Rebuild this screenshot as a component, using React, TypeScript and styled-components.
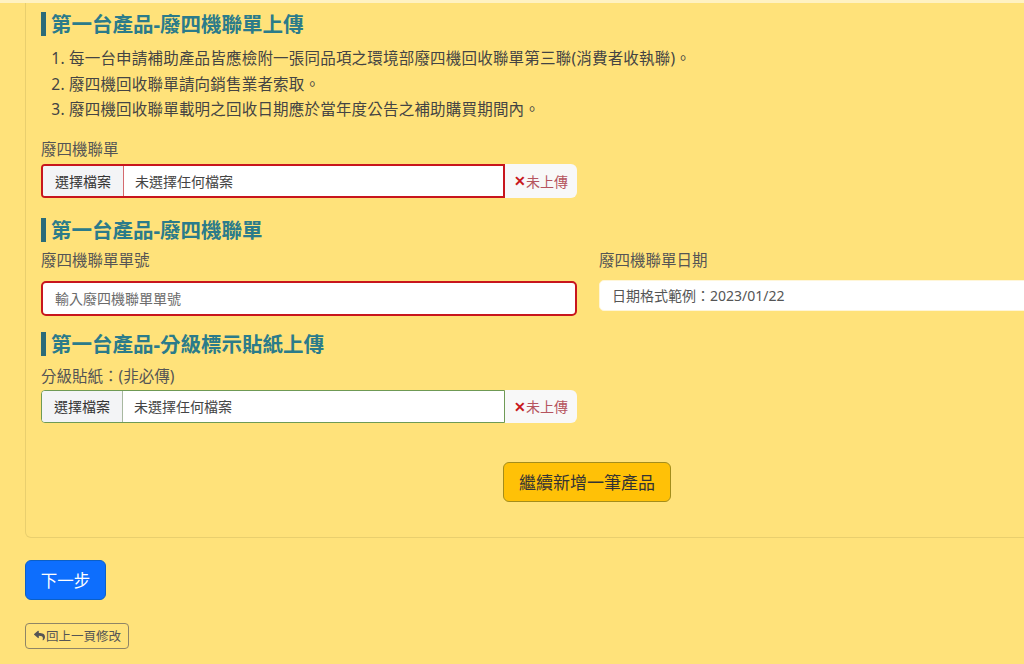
import styled, { createGlobalStyle } from "styled-components"
import { FaReply } from "react-icons/fa"

const GlobalStyle = createGlobalStyle`
    html, body {
        margin: 0;
        padding: 0;
        background-color: #ffe27a;
        overflow: hidden;
        font-family: "Noto Sans", "Noto Sans CJK TC", sans-serif;
    }
`

const TopStrip = styled.div`
    height: 3px;
    background-color: #fff2c2;
`

const Page = styled.div`
    padding-left: 25px;
    width: 1200px;
`

const Card = styled.div`
    width: 1124px;
    box-sizing: border-box;
    border: solid 1px #e9cf6e;
    border-top: none;
    border-radius: 0 0 6px 6px;
    padding: 9px 15px 35px 15px;
`

const Heading = styled.h3<{ gap?: number }>`
    margin: ${({ gap = 0 }) => gap}px 0 0 0;
    font-size: 20.5px;
    line-height: 24px;
    font-weight: 700;
    color: #2b7b8a;
    border-left: solid 5px #2b6c79;
    padding-left: 5px;
`

const Notes = styled.ol`
    margin: 10px 0 0 0;
    padding-left: 28px;
    font-size: 15.5px;
    line-height: 25.5px;
    letter-spacing: 0.2px;
    color: #444;
`

const Label = styled.div<{ gap?: number }>`
    margin-top: ${({ gap = 0 }) => gap}px;
    font-size: 15.5px;
    line-height: 22px;
    color: #555;
`

const Row = styled.div`
    display: grid;
    grid-template-columns: 536px 536px;
    column-gap: 22px;
`

const FileGroup = styled.div<{ gap?: number; height: number }>`
    margin-top: ${({ gap = 0 }) => gap}px;
    width: 536px;
    height: ${({ height }) => height}px;
    display: flex;
`

const FileBox = styled.div<{ tone: "red" | "green" }>`
    flex: 1;
    display: flex;
    align-items: stretch;
    background-color: #fff;
    border: ${({ tone }) => (tone === "red" ? "solid 2px #c8161d" : "solid 1px #6f9a55")};
    border-radius: 4px 0 0 4px;
    font-size: 14px;
    color: #444;
    overflow: hidden;
`

const PickButton = styled.div<{ tone: "red" | "green" }>`
    display: flex;
    align-items: center;
    padding: 0 12px;
    background-color: #f3f4f6;
    border-right: solid 1px ${({ tone }) => (tone === "red" ? "#d46a6e" : "#a8b8a0")};
    color: #333;
`

const FileName = styled.div`
    display: flex;
    align-items: center;
    padding-left: 11px;
`

const Status = styled.div`
    width: 72px;
    display: flex;
    align-items: center;
    justify-content: center;
    background-color: #f8f8f8;
    border-radius: 0 6px 6px 0;
    font-size: 14px;
    color: #b5545e;
`

const Cross = styled.span`
    color: #c8161d;
    font-weight: 700;
`

const TextInput = styled.div<{ tone?: "red" | "plain"; height: number; gap: number }>`
    margin-top: ${({ gap }) => gap}px;
    height: ${({ height }) => height}px;
    box-sizing: border-box;
    display: flex;
    align-items: center;
    padding-left: 12px;
    background-color: #fff;
    border: ${({ tone }) => (tone === "red" ? "solid 2px #c8161d" : "solid 1px #fff6d8")};
    border-radius: 5px;
    font-size: 14px;
    color: ${({ tone }) => (tone === "red" ? "#6b6b6b" : "#555")};
`

const Field = styled.div`
    display: flex;
    flex-direction: column;
`

const Actions = styled.div`
    margin-top: 39px;
    display: flex;
    justify-content: center;
`

const AddButton = styled.button`
    height: 40px;
    padding: 0 15px;
    background-color: #ffc107;
    border: solid 1px #a38d1c;
    border-radius: 6px;
    font-family: inherit;
    font-size: 17px;
    color: #333;
`

const NextButton = styled.button`
    display: block;
    margin-top: 22px;
    width: 81px;
    height: 40px;
    background-color: #0d6efd;
    border: solid 1px #0b5fc7;
    border-radius: 6px;
    font-family: inherit;
    font-size: 16.5px;
    color: #fff;
`

const BackButton = styled.button`
    display: flex;
    align-items: center;
    gap: 1px;
    margin-top: 23px;
    height: 26px;
    padding: 0 7px 0 8px;
    background-color: transparent;
    border: solid 1px #8f8566;
    border-radius: 4px;
    font-family: inherit;
    font-size: 12.5px;
    color: #555;
`

function FileInput({ tone, gap, height }: { tone: "red" | "green"; gap: number; height: number }) {
    return (
        <FileGroup gap={gap} height={height}>
            <FileBox tone={tone}>
                <PickButton tone={tone}>選擇檔案</PickButton>
                <FileName>未選擇任何檔案</FileName>
            </FileBox>
            <Status>
                <Cross>✕</Cross>未上傳
            </Status>
        </FileGroup>
    )
}

export default function App() {
    return (
        <>
            <GlobalStyle />
            <TopStrip />
            <Page>
                <Card>
                    <Heading>第一台產品-廢四機聯單上傳</Heading>
                    <Notes>
                        <li>每一台申請補助產品皆應檢附一張同品項之環境部廢四機回收聯單第三聯(消費者收執聯)。</li>
                        <li>廢四機回收聯單請向銷售業者索取。</li>
                        <li>廢四機回收聯單載明之回收日期應於當年度公告之補助購買期間內。</li>
                    </Notes>
                    <Label gap={15}>廢四機聯單</Label>
                    <FileInput tone="red" gap={4} height={34} />

                    <Heading gap={20}>第一台產品-廢四機聯單</Heading>
                    <Row>
                        <Field>
                            <Label gap={7}>廢四機聯單單號</Label>
                            <TextInput tone="red" height={35} gap={10}>輸入廢四機聯單單號</TextInput>
                        </Field>
                        <Field>
                            <Label gap={7}>廢四機聯單日期</Label>
                            <TextInput height={31} gap={9}>日期格式範例：2023/01/22</TextInput>
                        </Field>
                    </Row>

                    <Heading gap={16}>第一台產品-分級標示貼紙上傳</Heading>
                    <Label gap={9}>分級貼紙：(非必傳)</Label>
                    <FileInput tone="green" gap={3} height={33} />

                    <Actions>
                        <AddButton>繼續新增一筆產品</AddButton>
                    </Actions>
                </Card>
                <NextButton>下一步</NextButton>
                <BackButton>
                    <FaReply size={11} color="#555" />
                    回上一頁修改
                </BackButton>
            </Page>
        </>
    )
}
